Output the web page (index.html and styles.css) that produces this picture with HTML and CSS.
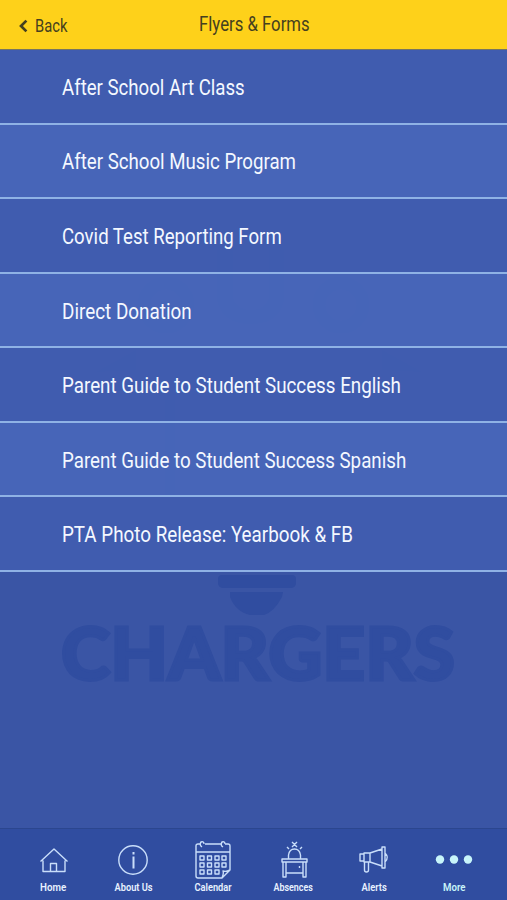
FILE: index.html
```html
<!DOCTYPE html>
<html lang="en">
<head>
<meta charset="utf-8">
<title>Flyers &amp; Forms</title>
<link rel="stylesheet" href="styles.css">
</head>
<body>
<div class="app">
  <header class="topbar">
    <a class="back"><svg width="9" height="14" viewBox="0 0 9 14"><path d="M7.400 1.600 2 7l5.400 5.400" fill="none" stroke="#45401f" stroke-width="2.700"/></svg><span class="fit" data-width="32">Back</span></a>
    <h1><span class="fit" data-width="111">Flyers &amp; Forms</span></h1>
    <span></span>
  </header>
  <main class="content">
    <svg class="watermark" width="507" height="778" viewBox="0 50 507 778">
      <g class="mark">
        <path d="M222 575h70q4 0 4 4v4q0 4-4 5h-70q-4-1-4-5v-4q0-4 4-4z"/>
        <path d="M230 592h53l-1 5q-8 15-18 18h-14q-14-3-20-18z"/>
        <path class="faint" d="M217 250h16v48q4 12 18 12t18-12v-48h15v50q-4 24-33 24t-34-24z"/>
        <circle cx="341" cy="305" r="22" class="ring"/>
        <circle cx="166" cy="305" r="22" class="ring"/>
        <path class="faint" d="M96 372l40-22v20zM422 372l-40-22v20zM165 400h10v95h-10zM340 400h10v95h-10z"/>
      </g>
      <text x="61" y="679.500" textLength="394" lengthAdjust="spacingAndGlyphs">CHARGERS</text>
    </svg>
    <ul class="list">
      <li><span class="fit" data-width="183">After School Art Class</span></li>
      <li><span class="fit" data-width="234">After School Music Program</span></li>
      <li><span class="fit" data-width="220">Covid Test Reporting Form</span></li>
      <li><span class="fit" data-width="130">Direct Donation</span></li>
      <li><span class="fit" data-width="339">Parent Guide to Student Success English</span></li>
      <li><span class="fit" data-width="344">Parent Guide to Student Success Spanish</span></li>
      <li><span class="fit" data-width="291">PTA Photo Release: Yearbook &amp; FB</span></li>
    </ul>
  </main>
  <nav class="tabs">
    <a><svg width="40" height="40" viewBox="0 0 40 40"><path d="M7.500 21.500 21 9l13.500 12.500M10 20.500v11h22v-11M17.500 31.500v-8h6v8"/></svg><span class="fit" data-width="26">Home</span></a>
    <a><svg width="40" height="40" viewBox="0 0 40 40"><circle cx="20" cy="20" r="14.200"/><path d="M20.500 16.500v12M20.500 12v2.500" stroke-width="2"/></svg><span class="fit" data-width="38">About Us</span></a>
    <a><svg width="40" height="40" viewBox="0 0 40 40"><path d="M7 4H5q-2 0-2 2v30q0 2 2 2h24l8-8V6q0-2-2-2h-3M12 4h16M3 12h34M29 38q2-5 1-7 3 1 7-1M9 7q-3-2-1-5 3-1 3 2M30 7q-3-2-1-5 3-1 3 2"/><path d="M7 16h4v4H7zM14.500 16h4v4h-4zM22 16h4v4h-4zM29 16h4v4h-4zM7 23h4v4H7zM14.500 23h4v4h-4zM22 23h4v4h-4zM29 23h4v4h-4zM7 30h4v4H7zM14.500 30h4v4h-4zM22 30h4v4h-4z"/></svg><span class="fit" data-width="37">Calendar</span></a>
    <a><svg width="40" height="40" viewBox="0 0 40 40"><path d="M8 19h25v3H8zM9 22v15h3V22M29 22v15h3V22M12 33h17M14.500 19v-4q1-6 6-6t6 6v4M18 2l5 5M23 2l-5 5M13 7l2 2M28 7l-2 2M25.500 26v2"/></svg><span class="fit" data-width="39">Absences</span></a>
    <a><svg width="40" height="40" viewBox="0 0 40 40"><path d="M6 14h4v7H6zM10 13h6v9h-6zM16 13l12-4v17l-12-4M28 7h3v21h-3zM31 13q4.500 4.500 0 9M10.500 22v8q0 2 2 2t2-2v-8"/></svg><span class="fit" data-width="25">Alerts</span></a>
    <a class="more"><svg width="40" height="40" viewBox="0 0 40 40"><g class="dots"><circle cx="6" cy="19.500" r="4.200"/><circle cx="20" cy="19.500" r="4.200"/><circle cx="34" cy="19.500" r="4.200"/></g></svg><span class="fit" data-width="22">More</span></a>
  </nav>
</div>
<script src="fit.js"></script>
</body>
</html>
```
FILE: styles.css
```css
* { box-sizing: border-box; }
body { margin: 0; font-family: Roboto, "Liberation Sans", sans-serif; }
.app { height: 900px; display: flex; flex-direction: column; background: #3a55a5; overflow: hidden; }
.fit { display: inline-block; white-space: nowrap; transform-origin: left center; }
.topbar { height: 50px; flex: none; display: grid; grid-template-columns: 198.500px 111px 197.500px; background: #fed11a; border-bottom: 1px solid #777560; color: #45401f; }
.back { display: flex; gap: 7px; align-items: center; padding: 3px 0 0 19px; font-size: 17.500px; }
h1 { margin: 0; font-size: 20.500px; font-weight: 400; line-height: 48px; width: 111px; }
.content { flex: 1; min-height: 0; display: grid; }
.content > * { grid-area: 1 / 1; }
.watermark { display: block; fill: #304da0; }
.watermark text { font: 900 73px Lato, sans-serif; stroke: #304da0; stroke-width: 3; }
.ring { fill: none; stroke: #304da0; stroke-width: 13; opacity: .7; }
.faint { opacity: .7; }
.list { position: relative; margin: 0; padding: 0; list-style: none; }
.list li { height: 74.580px; padding: 1px 0 0 62px; display: flex; align-items: center; border-bottom: 2px solid #8fb2e5; background: rgba(65, 93, 176, .91); color: #f4f8ff; font-size: 22.500px; }
.list li:nth-child(even) { background: rgba(73, 103, 186, .91); }
.tabs { height: 72px; flex: none; display: grid; grid-template-columns: repeat(6, 80.200px); justify-content: center; background: #304da0; border-top: 1px solid #2b468f; color: #e8f2ff; font-size: 10.500px; font-weight: 600; }
.tabs a { display: flex; flex-direction: column; align-items: center; padding-top: 11px; }
.tabs svg { display: block; fill: none; stroke: #c9defa; stroke-width: 1.400; stroke-linejoin: round; overflow: visible; }
.tabs .fit { line-height: 14px; margin-top: 1px; transform-origin: center; }
.tabs .dots { fill: #c8f5fa; stroke: none; }
.tabs .more { color: #c8f5fa; }
```
FILE: fit.js
```js
// Condense each label to its designed width.
document.querySelectorAll('.fit').forEach(function (el) {
  el.style.transform = 'scaleX(' + el.dataset.width / el.offsetWidth + ')';
});
```
